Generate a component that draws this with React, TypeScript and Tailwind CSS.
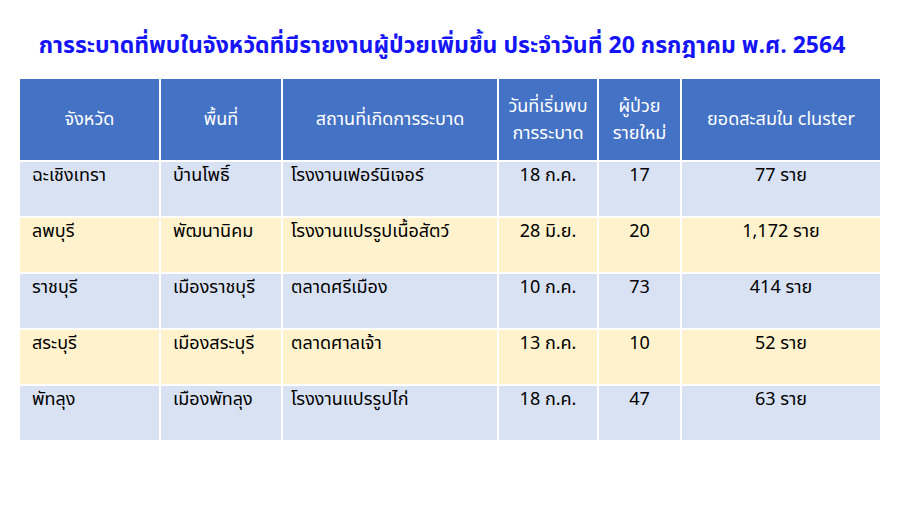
import React from "react";

const rows = [
  ["ฉะเชิงเทรา", "บ้านโพธิ์", "โรงงานเฟอร์นิเจอร์", "18 ก.ค.", "17", "77 ราย"],
  ["ลพบุรี", "พัฒนานิคม", "โรงงานแปรรูปเนื้อสัตว์", "28 มิ.ย.", "20", "1,172 ราย"],
  ["ราชบุรี", "เมืองราชบุรี", "ตลาดศรีเมือง", "10 ก.ค.", "73", "414 ราย"],
  ["สระบุรี", "เมืองสระบุรี", "ตลาดศาลเจ้า", "13 ก.ค.", "10", "52 ราย"],
  ["พัทลุง", "เมืองพัทลุง", "โรงงานแปรรูปไก่", "18 ก.ค.", "47", "63 ราย"],
];

export default function App() {
  return (
    <div
      className="w-[900px] h-[506px] bg-white overflow-hidden"
      style={{ fontFamily: 'Tahoma, "Noto Sans Thai", "Noto Sans", "DejaVu Sans", sans-serif' }}
    >
      <div className="pt-[29px] pr-[16px] h-[79px] text-center text-[23px] font-bold text-[#1414f5] leading-[34px] whitespace-nowrap">
        การระบาดที่พบในจังหวัดที่มีรายงานผู้ป่วยเพิ่มขึ้น ประจำวันที่ 20 กรกฎาคม พ.ศ. 2564
      </div>
      <div className="ml-[20px] w-[860px] grid grid-cols-[139px_120px_214px_98px_81px_198px] gap-[2px] text-[18px]">
        <div className="h-[81px] bg-[#4472c4] text-white flex items-center justify-center">จังหวัด</div>
        <div className="h-[81px] bg-[#4472c4] text-white flex items-center justify-center">พื้นที่</div>
        <div className="h-[81px] bg-[#4472c4] text-white flex items-center justify-center">สถานที่เกิดการระบาด</div>
        <div className="h-[81px] bg-[#4472c4] text-white flex items-center justify-center text-center leading-[27px]">
          วันที่เริ่มพบ
          <br />
          การระบาด
        </div>
        <div className="h-[81px] bg-[#4472c4] text-white flex items-center justify-center text-center leading-[27px]">
          ผู้ป่วย
          <br />
          รายใหม่
        </div>
        <div className="h-[81px] bg-[#4472c4] text-white flex items-center justify-center">ยอดสะสมใน cluster</div>
        {rows.map((r, i) => {
          const bg = i % 2 === 0 ? "bg-[#d9e2f3]" : "bg-[#fff2cc]";
          return (
            <React.Fragment key={i}>
              <div className={`${bg} h-[54px] pl-[12px] leading-[28px] text-black`}>{r[0]}</div>
              <div className={`${bg} h-[54px] pl-[12px] leading-[28px] text-black`}>{r[1]}</div>
              <div className={`${bg} h-[54px] pl-[8px] leading-[28px] text-black`}>{r[2]}</div>
              <div className={`${bg} h-[54px] leading-[28px] text-black text-center`}>{r[3]}</div>
              <div className={`${bg} h-[54px] leading-[28px] text-black text-center`}>{r[4]}</div>
              <div className={`${bg} h-[54px] leading-[28px] text-black text-center`}>{r[5]}</div>
            </React.Fragment>
          );
        })}
      </div>
    </div>
  );
}
